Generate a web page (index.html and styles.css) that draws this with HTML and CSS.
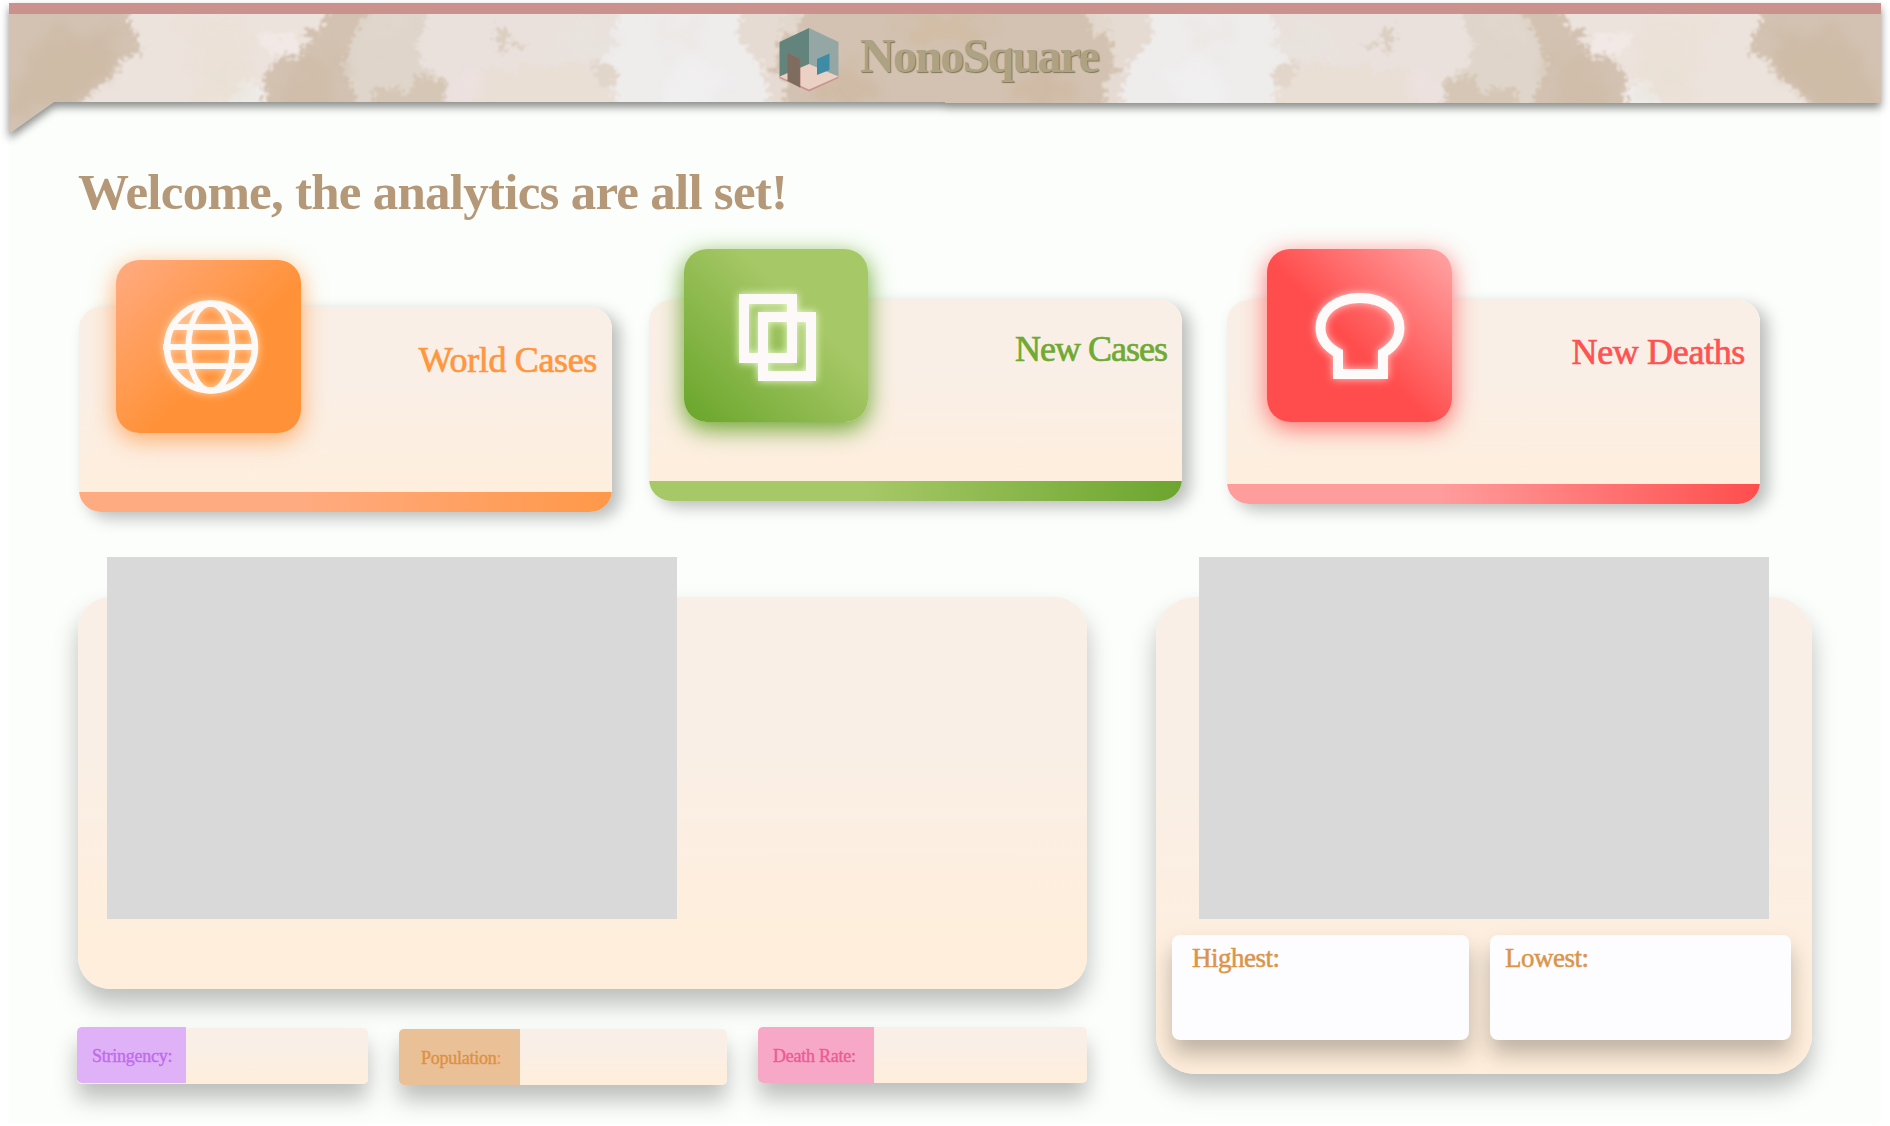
FILE: index.html
```html
<!DOCTYPE html>
<html lang="en">
<head>
<meta charset="utf-8">
<title>NonoSquare</title>
<link rel="stylesheet" href="styles.css">
</head>
<body>
<div class="page">
  <header class="banner">
    <svg class="banner-art" viewBox="0 0 1872 131" aria-hidden="true">
      <defs>
        <clipPath id="ribbon"><path d="M0 0H1872V100H936V99H45L0 131Z"/></clipPath>
        <filter id="rough" x="-2%" y="-20%" width="104%" height="140%">
          <feTurbulence type="fractalNoise" baseFrequency=".045" numOctaves="2" seed="8" result="wide"/>
          <feDisplacementMap in="SourceGraphic" in2="wide" scale="26" xChannelSelector="R" yChannelSelector="G" result="bent"/>
          <feTurbulence type="fractalNoise" baseFrequency=".2" numOctaves="2" seed="5" result="fine"/>
          <feDisplacementMap in="bent" in2="fine" scale="20" xChannelSelector="G" yChannelSelector="R" result="jagged"/>
          <feGaussianBlur in="jagged" stdDeviation=".8"/>
        </filter>
        <filter id="cloud" x="-2%" y="-20%" width="104%" height="140%">
          <feTurbulence type="fractalNoise" baseFrequency=".06" numOctaves="3" seed="3" result="n"/>
          <feDisplacementMap in="SourceGraphic" in2="n" scale="50" xChannelSelector="R" yChannelSelector="G" result="d"/>
          <feGaussianBlur in="d" stdDeviation="4"/>
        </filter>
        <g id="half">
          <g filter="url(#rough)">
            <path fill="#d3c2b1" d="M-40-30H960V170H-40Z"/>
            <path fill="#ddd0c2" d="M121 0L128 50 90 80 60 110H100L160 60V0Z"/>
            <path fill="#ede3dd" d="M121-20V30L137 45 118 62 98 76 60 112 55 120H240L262 92 258 68 290 50 312 20 314-20Z"/>
            <path fill="#f2e8e5" d="M250 38L275 28 300 54 262 58Z"/>
            <path fill="#efeeee" d="M222 98L236 76 256 88 252 112H215Z"/>
            <path fill="#dfd5ca" d="M372-20L350 20 334 70 352 90 350 130H440V-20Z"/>
            <path fill="#d6c6b5" d="M365 84L400 90 406 75 440 82 445 120H360Z"/>
            <path fill="#eae1dd" d="M430-20L410 30 415 60 436 84 440 125H800V-20Z"/>
            <path fill="#e9dfd5" d="M470 70L560 60 600 75 615 125H460Z"/>
            <path fill="#dccfc1" d="M486 20L505 32 515 45 495 52 485 35Z"/>
            <path fill="#e2d6ca" d="M580 58L604 60 604 82 588 84Z"/>
            <path fill="#efecec" d="M612-20L606 30 600 60 608 80 606 125H790L765 70 748 30 742-20Z"/>
            <path fill="#e6dbd2" d="M725-20L738 50 758 70 762 125H830L800-20Z"/>
            <path fill="#d3c2b1" d="M812-20L782 28 762 45 765 68 776 90 778 130H960V-20Z"/>
            <path fill="#e3d8ce" d="M775-10H800L786 28 774 34Z"/>
          </g>
          <g filter="url(#cloud)" opacity=".5">
            <path fill="#cbb59e" d="M30 40L100 25 110 60 50 110H0Z"/>
            <path fill="#eae0d3" d="M170 15H240V60L190 80Z"/>
            <path fill="#cdb8a3" d="M290 60L330 55 325 110H265Z"/>
            <path fill="#e8dfcf" d="M200 55H240V100H190Z"/>
            <path fill="#e5d9cf" d="M360 15L400 10 395 40 365 50Z"/>
            <path fill="#e7e5df" d="M560 20L600 40 590 60 550 50Z"/>
            <path fill="#f0e2e2" d="M450 65L480 70 475 98 440 90Z"/>
            <path fill="#ccb49a" d="M820 60L870 80 860 100H800Z"/>
            <path fill="#d0b899" d="M890 15H940V45L905 40Z"/>
            <path fill="#e9e4de" d="M640 15L690 20 680 45 650 40Z"/>
            <path fill="#f2f3f5" d="M660 60L720 70 700 110H650Z"/>
          </g>
        </g>
      </defs>
      <g clip-path="url(#ribbon)">
        <svg width="936" height="131"><use href="#half"/></svg>
        <g transform="translate(1872 0) scale(-1 1)"><svg width="936" height="131"><use href="#half"/></svg></g>
        <path fill="#ca918d" d="M0 0H1872V11H0Z"/>
      </g>
    </svg>
    <div class="brand">
      <svg class="logo" viewBox="0 0 60 64" aria-hidden="true">
        <path fill="#63837d" d="M.5 14L30 0V50L.5 49Z"/>
        <path fill="#94a7a5" d="M30 0L59.500 14V49L30 50Z"/>
        <path fill="#ca918d" d="M.5 48L30 61 59.500 48V50L30 63.500 .5 50Z"/>
        <path fill="#ebd1c3" d="M30 36L59.500 48.500 30 61.500 .5 48.500Z"/>
        <path fill="#7e6c5f" d="M8.500 25L21 31V59.500L8.500 53Z"/>
        <path fill="none" stroke="#a0695f" stroke-width=".7" d="M8.500 25L21 31V59.500"/>
        <path fill="#3d8ba5" d="M38 31L50.500 25.500V42L38 47Z"/>
      </svg>
      <span class="brand-name">NonoSquare</span>
    </div>
  </header>

  <main>
    <h1>Welcome, the analytics are all set!</h1>

    <section class="stats">
      <article class="stat world">
        <div class="tile">
          <svg viewBox="0 0 96 94" fill="none" stroke="#fdf9f7" aria-hidden="true">
            <ellipse cx="48" cy="47" rx="44" ry="43.500" stroke-width="6.500"/>
            <ellipse cx="47.500" cy="47" rx="22" ry="43.500" stroke-width="6"/>
            <path stroke-width="6" d="M9 27H87M0 47H92M9 66H87"/>
          </svg>
        </div>
        <h2>World Cases</h2>
      </article>
      <article class="stat cases">
        <div class="tile">
          <svg viewBox="0 0 96 94" fill="none" stroke="#fdf9f9" stroke-width="10" aria-hidden="true">
            <path d="M15 8H63V67H15ZM34 26H82V85H34Z"/>
          </svg>
        </div>
        <h2>New Cases</h2>
      </article>
      <article class="stat deaths">
        <div class="tile">
          <svg viewBox="0 0 96 94" fill="none" stroke="#fdfbf9" stroke-width="10" aria-hidden="true">
            <path d="M26 84V63C15 57 8.500 48 8.500 38C8.500 21 24 8 48 8S87.500 21 87.500 38C87.500 48 81 57 71 63V84Z"/>
          </svg>
        </div>
        <h2>New Deaths</h2>
      </article>
    </section>

    <section class="board">
      <div class="left">
        <div class="panel chart-panel"><div class="chart"></div></div>
        <div class="facts">
          <div class="fact stringency"><span>Stringency:</span></div>
          <div class="fact population"><span>Population<b>:</b></span></div>
          <div class="fact rate"><span>Death Rate:</span></div>
        </div>
      </div>
      <div class="panel range-panel">
        <div class="chart"></div>
        <div class="ranges">
          <div class="range highest">Highest:</div>
          <div class="range lowest">Lowest:</div>
        </div>
      </div>
    </section>
  </main>
</div>
</body>
</html>
```

FILE: styles.css
```css
* { box-sizing: border-box; }

body {
  margin: 0;
  background: #fff;
  font-family: "Liberation Serif", serif;
  overflow: hidden;
}

.page {
  width: 1872px;
  height: 1121px;
  margin: 3px 0 0 9px;
  background: #fbfefb;
}

h1, h2 { margin: 0; }

.banner {
  position: relative;
  height: 131px;
}

.banner-art {
  display: block;
  width: 1872px;
  height: 131px;
  overflow: visible;
  filter: drop-shadow(0 5px 4px rgba(0, 0, 0, .45));
}

.brand {
  position: absolute;
  left: 770px;
  top: 25px;
  display: flex;
  gap: 21px;
}

.logo { width: 60px; height: 64px; }

.brand-name {
  font-size: 48px;
  line-height: 55px;
  font-weight: 700;
  letter-spacing: -1.700px;
  color: #ada384;
  text-shadow: 1px 1px 1px #7f775a;
}

main { padding: 25px 60px 0 68px; }

h1 {
  height: 68px;
  padding-left: 1px;
  font-size: 51px;
  line-height: 66px;
  letter-spacing: -.750px;
  color: #b59878;
}

.stats {
  display: flex;
  align-items: flex-start;
  padding: 73px 0 0 2px;
}

.stat {
  display: flex;
  justify-content: space-between;
  width: 533px;
  border-radius: 22px;
  box-shadow: 8px 6px 16px rgba(0, 0, 0, .26);
}

.world {
  height: 205px;
  margin-top: 7px;
  padding: 0 15px 0 37px;
  background: linear-gradient(90deg, #ffab82 40%, #ff9848) bottom / 100% 20px no-repeat,
    linear-gradient(#faefe6 40%, #ffeedb);
}

.cases {
  height: 201px;
  margin-left: 37px;
  padding: 0 15px 0 35px;
  background: linear-gradient(90deg, #a7c867 40%, #6ca52f) bottom / 100% 20px no-repeat,
    linear-gradient(#faefe6 40%, #ffeedb);
}

.deaths {
  height: 204px;
  margin-left: 45px;
  padding: 0 15px 0 40px;
  background: linear-gradient(90deg, #ff9c9c 40%, #ff4d4d) bottom / 100% 20px no-repeat,
    linear-gradient(#faefe6 40%, #ffeedb);
}

.tile {
  width: 185px;
  height: 173px;
  border-radius: 23px;
}

.tile svg {
  display: block;
  width: 96px;
  height: 94px;
  margin: 40px 0 0 47px;
}

.world .tile {
  margin-top: -47px;
  background: linear-gradient(135deg, #ffab82, #ff9238 58%);
  box-shadow: 0 6px 24px rgba(255, 146, 56, .75);
}

.cases .tile {
  width: 184px;
  margin-top: -51px;
  background: linear-gradient(45deg, #68a52a, #a7c867 65%);
  box-shadow: 0 7px 24px rgba(104, 165, 42, 1);
}

.cases .tile svg { margin: 42px 0 0 45px; }

.deaths .tile {
  margin-top: -51px;
  background: linear-gradient(45deg, #ff4d4d 46%, #ff9c9c 94%);
  box-shadow: 0 6px 24px rgba(255, 77, 77, .8);
}

.deaths .tile svg { margin: 41px 0 0 45px; }

.world svg { filter: drop-shadow(0 0 4px #ffd9b4); }
.cases svg { filter: drop-shadow(0 0 4px #f1ffd9); }
.deaths svg { filter: drop-shadow(0 0 4px #ffd0d0); }

.stat h2 {
  font-size: 36px;
  line-height: 40px;
  font-weight: 400;
  letter-spacing: -.350px;
  -webkit-text-stroke: .7px;
}

.world h2 { margin-top: 33px; color: #ff9640; }
.cases h2 { margin-top: 29px; color: #6faa33; letter-spacing: -1px; }
.deaths h2 { margin-top: 32px; color: #ff5252; }

.board {
  display: flex;
  gap: 69px;
  margin-top: 85px;
}

.left { padding-left: 1px; }

.panel {
  background: linear-gradient(#faefe6 40%, #ffeedb 90%);
  box-shadow: 0 15px 25px rgba(0, 0, 0, .25);
}

.chart {
  width: 570px;
  height: 362px;
  background: #d9d9d9;
}

.panel .chart { margin-top: -40px; }

.chart-panel {
  display: flex;
  width: 1009px;
  height: 392px;
  padding-left: 29px;
  border-radius: 32px;
}

.facts {
  display: flex;
  align-items: flex-start;
  margin: 38px 0 0 -1px;
}

.fact {
  display: flex;
  height: 56px;
  border-radius: 5px;
  background: linear-gradient(#faefe6 40%, #ffeedb);
  box-shadow: 0 15px 22px rgba(0, 0, 0, .25);
}

.fact span {
  border-radius: 5px 0 0 5px;
  font-size: 18px;
  line-height: 58px;
  letter-spacing: -.25px;
  -webkit-text-stroke: .4px;
}

.fact b { font-weight: 400; color: #ff9640; }

.stringency { width: 291px; margin-top: 1px; }
.stringency span { width: 109px; margin-top: -1px; padding-left: 15px; height: 56px; background: #dfb2f8; color: #bf6bea; }
.population { width: 328px; margin: 2px 0 0 31px; }
.population span { width: 121px; padding-left: 22px; background: #eac197; color: #dc9144; line-height: 59px; }
.rate { width: 329px; margin-left: 31px; }
.rate span { width: 116px; padding-left: 15px; background: #f7a8c7; color: #ec5b94; }

.range-panel {
  width: 656px;
  height: 477px;
  border-radius: 39px;
}

.range-panel .chart { margin-left: 43px; }

.ranges {
  display: flex;
  gap: 21px;
  padding: 16px 0 0 16px;
}

.range {
  height: 105px;
  border-radius: 8px;
  background: #fdfdff;
  box-shadow: 0 14px 22px rgba(0, 0, 0, .25);
  font-size: 27px;
  line-height: 47px;
  letter-spacing: -.5px;
  color: #dc9449;
  -webkit-text-stroke: .5px;
}

.highest { width: 297px; padding-left: 20px; }
.lowest { width: 301px; padding-left: 15px; }
```
